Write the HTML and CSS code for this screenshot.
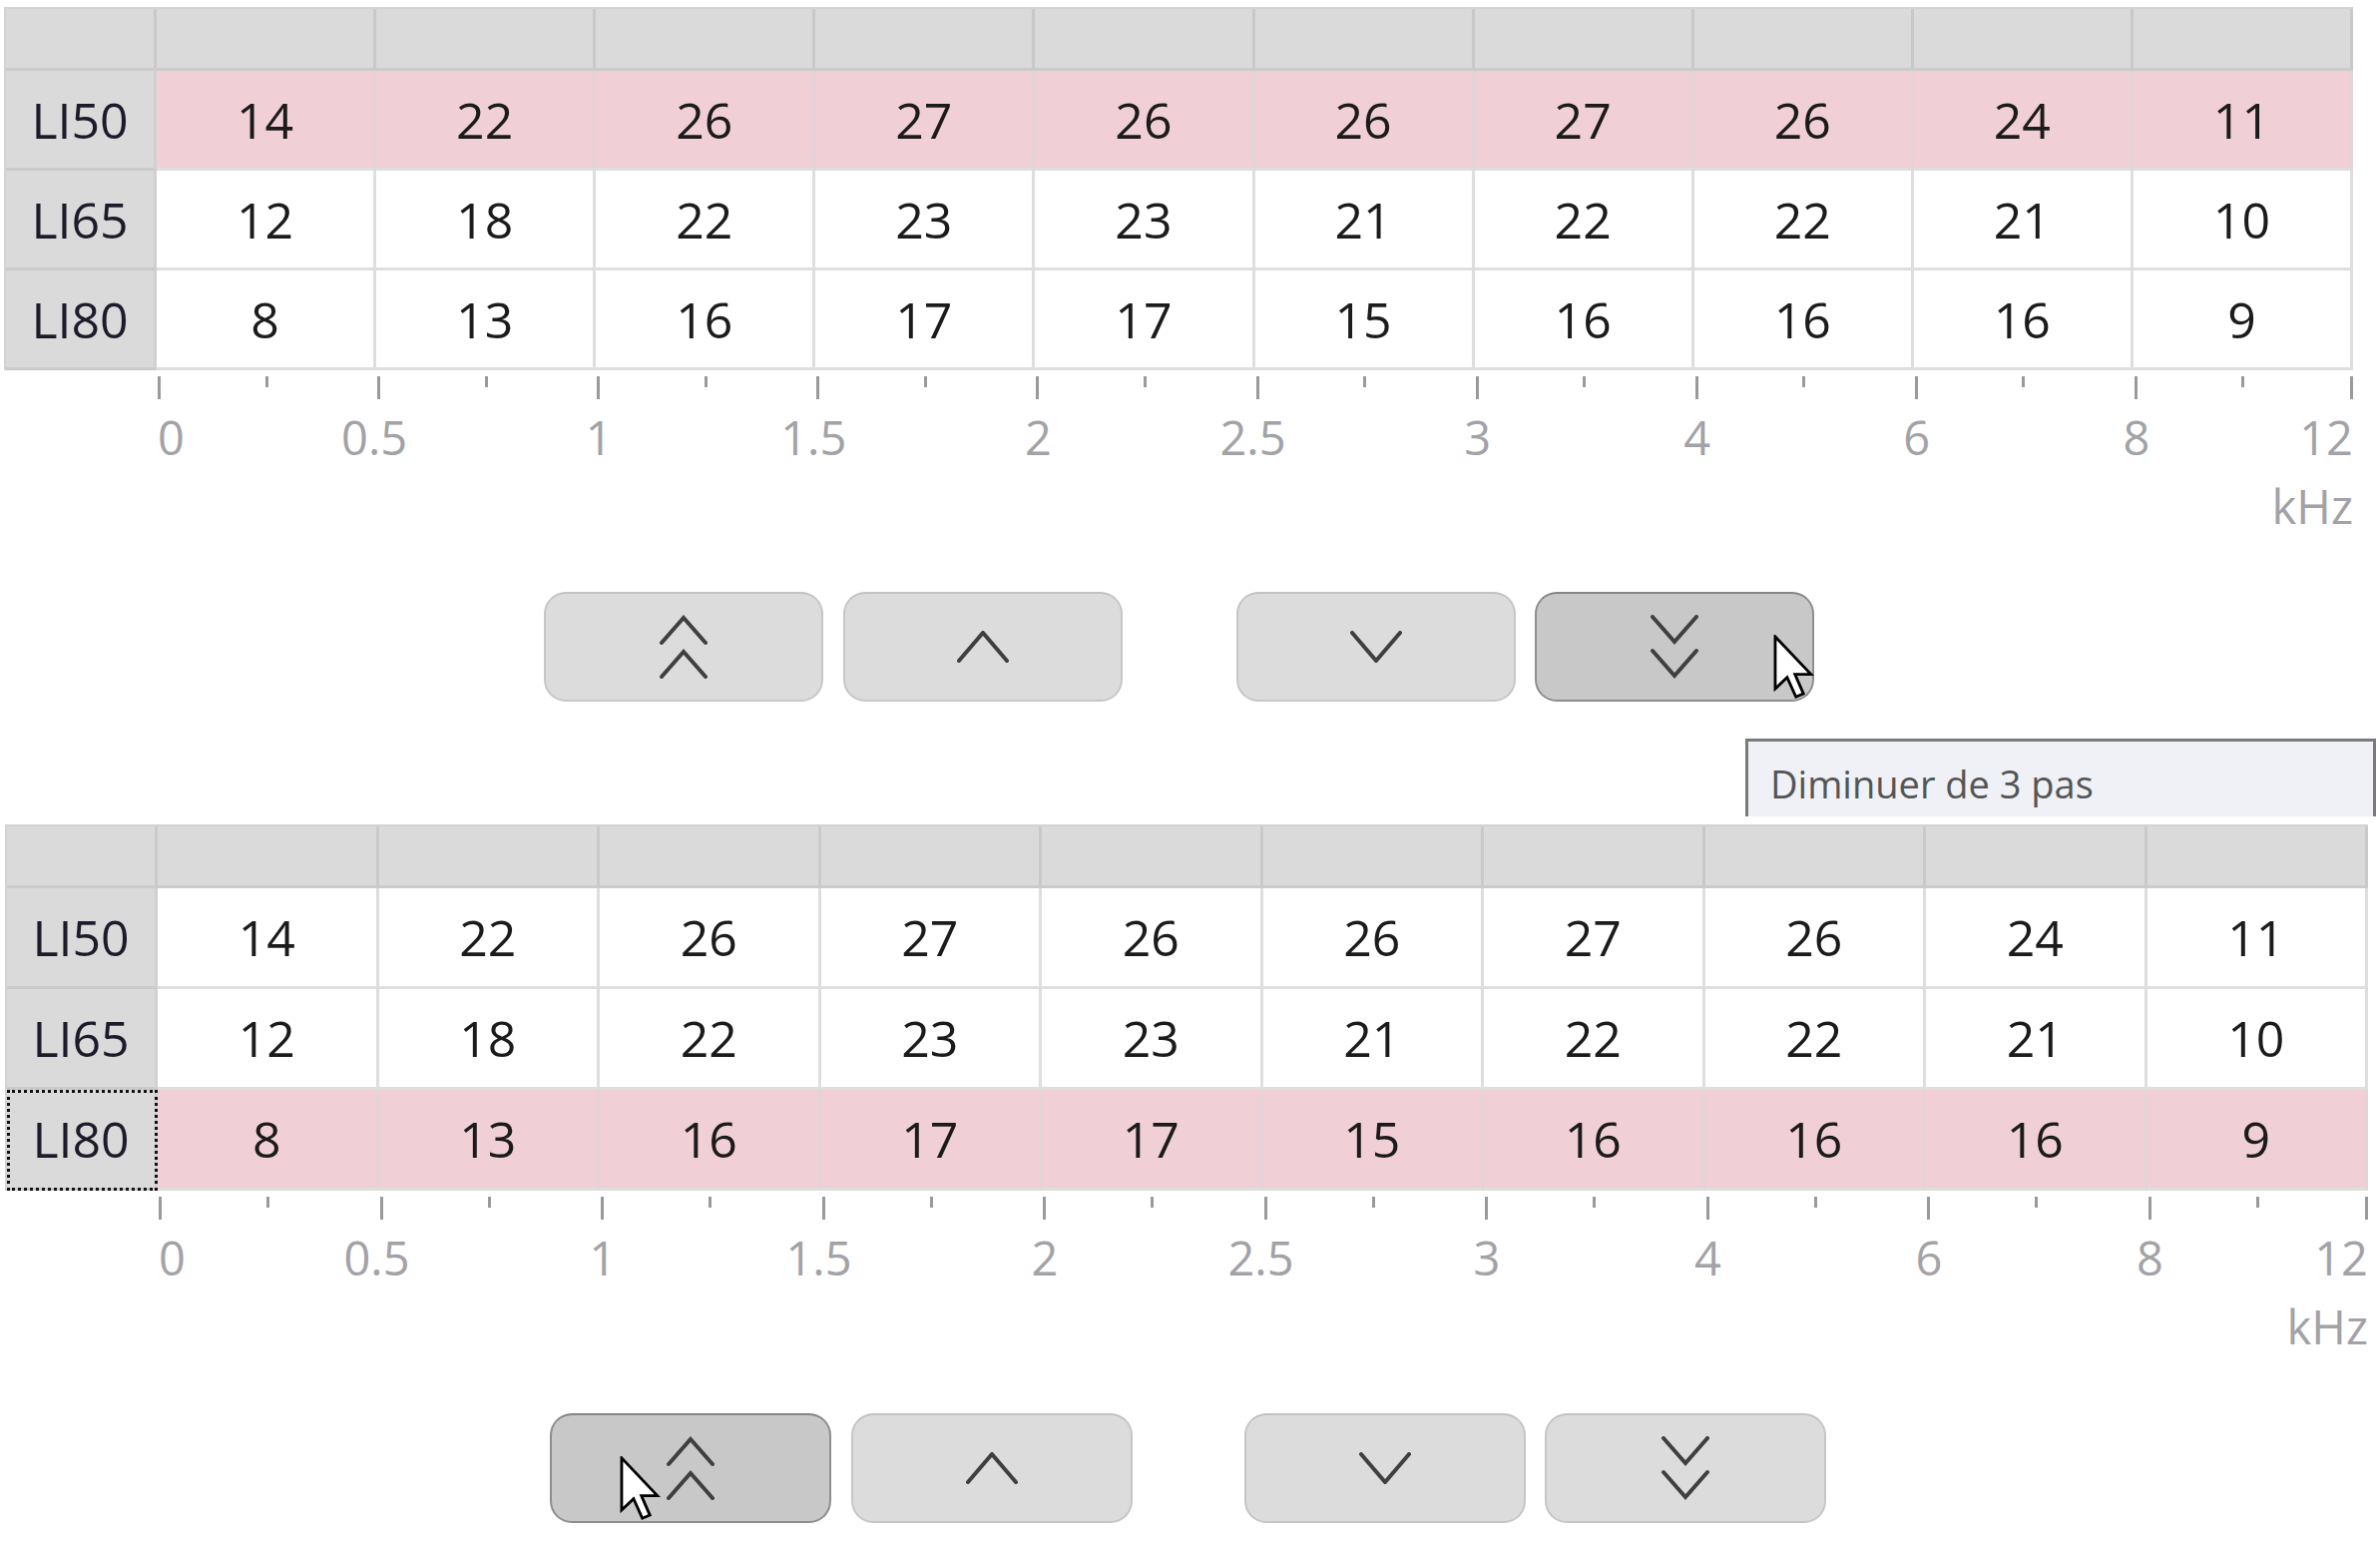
FILE: index.html
```html
<!DOCTYPE html>
<html lang="fr">
<head>
<meta charset="utf-8">
<title>LI</title>
<link rel="stylesheet" href="styles.css">
</head>
<body>
<div class="page">
  <section class="panel panel-a">
    <div class="grid-table">
      <div class="cell head"></div><div class="cell head"></div><div class="cell head"></div><div class="cell head"></div><div class="cell head"></div><div class="cell head"></div><div class="cell head"></div><div class="cell head"></div><div class="cell head"></div><div class="cell head"></div><div class="cell head"></div>
      <div class="cell label">LI50</div><div class="cell data hl">14</div><div class="cell data hl">22</div><div class="cell data hl">26</div><div class="cell data hl">27</div><div class="cell data hl">26</div><div class="cell data hl">26</div><div class="cell data hl">27</div><div class="cell data hl">26</div><div class="cell data hl">24</div><div class="cell data hl">11</div>
      <div class="cell label">LI65</div><div class="cell data">12</div><div class="cell data">18</div><div class="cell data">22</div><div class="cell data">23</div><div class="cell data">23</div><div class="cell data">21</div><div class="cell data">22</div><div class="cell data">22</div><div class="cell data">21</div><div class="cell data">10</div>
      <div class="cell label">LI80</div><div class="cell data">8</div><div class="cell data">13</div><div class="cell data">16</div><div class="cell data">17</div><div class="cell data">17</div><div class="cell data">15</div><div class="cell data">16</div><div class="cell data">16</div><div class="cell data">16</div><div class="cell data">9</div>
    </div>
    <div class="axis-ticks">
      <div></div><div class="tk"></div><div class="tk"></div><div class="tk"></div><div class="tk"></div><div class="tk"></div><div class="tk"></div><div class="tk"></div><div class="tk"></div><div class="tk"></div><div class="tk tk-last"></div>
    </div>
    <div class="axis-labels">
      <div></div>
      <div class="lb lb-first"><span>0</span></div>
      <div class="lb"><span class="wide">0.5</span></div>
      <div class="lb"><span>1</span></div>
      <div class="lb"><span class="wide">1.5</span></div>
      <div class="lb"><span>2</span></div>
      <div class="lb"><span class="wide">2.5</span></div>
      <div class="lb"><span>3</span></div>
      <div class="lb"><span>4</span></div>
      <div class="lb"><span>6</span></div>
      <div class="lb lb-last"><span>8</span><span class="end">12</span></div>
    </div>
    <div class="unit">kHz</div>
    <div class="btn-row">
      <div class="btn-group">
        <button class="btn" type="button"><svg class="ico-dbl" viewBox="0 0 48 64"><polyline points="2,28 24,3 46,28"/><polyline points="2,62 24,37 46,62"/></svg></button>
        <button class="btn" type="button"><svg class="ico-one" viewBox="0 0 52 32"><polyline points="2,30 26,2 50,30"/></svg></button>
      </div>
      <div class="btn-group group-right">
        <button class="btn" type="button"><svg class="ico-one" viewBox="0 0 52 32"><polyline points="2,2 26,30 50,2"/></svg></button>
        <button class="btn btn-active" type="button"><svg class="ico-dbl" viewBox="0 0 48 64"><polyline points="2,2 24,27 46,2"/><polyline points="2,36 24,61 46,36"/></svg>
          <svg class="cursor cursor-a" viewBox="0 0 13 21"><path d="M0.6,0.6 L0.6,17.2 L4.4,13.6 L7.2,19.8 L9.6,18.8 L6.9,12.6 L12,12.6 Z"/></svg>
        </button>
      </div>
    </div>
  </section>

  <div class="tooltip">Diminuer de 3 pas</div>

  <section class="panel panel-b">
    <div class="grid-table">
      <div class="cell head"></div><div class="cell head"></div><div class="cell head"></div><div class="cell head"></div><div class="cell head"></div><div class="cell head"></div><div class="cell head"></div><div class="cell head"></div><div class="cell head"></div><div class="cell head"></div><div class="cell head"></div>
      <div class="cell label">LI50</div><div class="cell data">14</div><div class="cell data">22</div><div class="cell data">26</div><div class="cell data">27</div><div class="cell data">26</div><div class="cell data">26</div><div class="cell data">27</div><div class="cell data">26</div><div class="cell data">24</div><div class="cell data">11</div>
      <div class="cell label">LI65</div><div class="cell data">12</div><div class="cell data">18</div><div class="cell data">22</div><div class="cell data">23</div><div class="cell data">23</div><div class="cell data">21</div><div class="cell data">22</div><div class="cell data">22</div><div class="cell data">21</div><div class="cell data">10</div>
      <div class="cell label focus">LI80</div><div class="cell data hl">8</div><div class="cell data hl">13</div><div class="cell data hl">16</div><div class="cell data hl">17</div><div class="cell data hl">17</div><div class="cell data hl">15</div><div class="cell data hl">16</div><div class="cell data hl">16</div><div class="cell data hl">16</div><div class="cell data hl">9</div>
    </div>
    <div class="axis-ticks">
      <div></div><div class="tk"></div><div class="tk"></div><div class="tk"></div><div class="tk"></div><div class="tk"></div><div class="tk"></div><div class="tk"></div><div class="tk"></div><div class="tk"></div><div class="tk tk-last"></div>
    </div>
    <div class="axis-labels">
      <div></div>
      <div class="lb lb-first"><span>0</span></div>
      <div class="lb"><span class="wide">0.5</span></div>
      <div class="lb"><span>1</span></div>
      <div class="lb"><span class="wide">1.5</span></div>
      <div class="lb"><span>2</span></div>
      <div class="lb"><span class="wide">2.5</span></div>
      <div class="lb"><span>3</span></div>
      <div class="lb"><span>4</span></div>
      <div class="lb"><span>6</span></div>
      <div class="lb lb-last"><span>8</span><span class="end">12</span></div>
    </div>
    <div class="unit">kHz</div>
    <div class="btn-row">
      <div class="btn-group">
        <button class="btn btn-active" type="button"><svg class="ico-dbl" viewBox="0 0 48 64"><polyline points="2,28 24,3 46,28"/><polyline points="2,62 24,37 46,62"/></svg>
          <svg class="cursor cursor-b" viewBox="0 0 13 21"><path d="M0.6,0.6 L0.6,17.2 L4.4,13.6 L7.2,19.8 L9.6,18.8 L6.9,12.6 L12,12.6 Z"/></svg>
        </button>
        <button class="btn" type="button"><svg class="ico-one" viewBox="0 0 52 32"><polyline points="2,30 26,2 50,30"/></svg></button>
      </div>
      <div class="btn-group group-right">
        <button class="btn" type="button"><svg class="ico-one" viewBox="0 0 52 32"><polyline points="2,2 26,30 50,2"/></svg></button>
        <button class="btn" type="button"><svg class="ico-dbl" viewBox="0 0 48 64"><polyline points="2,2 24,27 46,2"/><polyline points="2,36 24,61 46,36"/></svg></button>
      </div>
    </div>
  </section>
</div>
</body>
</html>
```

FILE: styles.css
```css
* { box-sizing: border-box; }

html, body {
  margin: 0;
  padding: 0;
  background: #ffffff;
}

body {
  font-family: "Open Sans", "Noto Sans", "Liberation Sans", sans-serif;
  color: #1b1b1b;
}

.page {
  position: relative;
  width: 2385px;
  height: 1546px;
  padding-top: 7px;
  overflow: hidden;
}

/* ---------- panels ---------- */
.panel-a {
  --tw: 2354px;
  --row-h: 100px;
  --btn-w: 280px;
  --gap-in: 20px;
  --gap-in2: 19px;
  --gap-mid: 114px;
  --btn-x: 541px;
  margin-left: 4px;
  width: 2354px;
}

.panel-b {
  --tw: 2368px;
  --row-h: 101px;
  --btn-w: 282px;
  --gap-in: 20px;
  --gap-in2: 19px;
  --gap-mid: 112px;
  --btn-x: 546px;
  margin-left: 5px;
  margin-top: 123px;
  width: 2368px;
}

/* ---------- table ---------- */
.grid-table {
  display: grid;
  width: var(--tw);
  grid-template-columns: 151px repeat(10, 1fr);
  grid-template-rows: 62px repeat(3, var(--row-h));
  border-left: 2px solid #d3d3d3;
  border-top: 2px solid #d3d3d3;
}

.cell {
  display: flex;
  align-items: center;
  justify-content: center;
  font-size: 50px;
  line-height: 1;
  border-right: 3px solid #dedede;
  border-bottom: 3px solid #dedede;
  background: #ffffff;
}

.cell.head {
  background: #dadada;
  border-right-color: #c9c9c9;
  border-bottom-color: #cbcbcb;
}

.cell.label {
  background: #dadada;
  color: #1d1b2a;
  border-right-color: #d0d0d0;
  border-bottom-color: #cacaca;
}

.cell.data.hl {
  background: #f1cfd7;
  border-right-color: #e2d4d8;
}

.cell.focus {
  outline: 3px dotted #111111;
  outline-offset: -3px;
}

/* ---------- axis ---------- */
.axis-ticks,
.axis-labels {
  display: grid;
  width: var(--tw);
  grid-template-columns: 153px repeat(10, 1fr);
}

.axis-ticks {
  height: 23px;
  margin-top: 6px;
}

.tk {
  background:
    linear-gradient(#9a9a9a, #9a9a9a) no-repeat 1px 0 / 3px 23px,
    linear-gradient(#9a9a9a, #9a9a9a) no-repeat 50% 0 / 3px 11px;
}

.tk-last {
  background:
    linear-gradient(#9a9a9a, #9a9a9a) no-repeat 1px 0 / 3px 23px,
    linear-gradient(#9a9a9a, #9a9a9a) no-repeat 50% 0 / 3px 11px,
    linear-gradient(#9a9a9a, #9a9a9a) no-repeat 100% 0 / 3px 23px;
}

.axis-labels {
  margin-top: 13px;
  height: 50px;
  font-size: 47px;
  font-weight: 400;
  line-height: 50px;
  color: #a2a2a7;
}

.lb span {
  display: inline-block;
  transform: translateX(calc(-50% + 3px));
}

.lb span.wide {
  transform: translateX(calc(-50% - 2px));
}

.lb-first span {
  transform: none;
  margin-left: 1px;
}

.lb-last {
  display: flex;
  justify-content: space-between;
}

.lb-last .end {
  transform: none;
}

.unit {
  width: var(--tw);
  margin-top: 19px;
  height: 50px;
  text-align: right;
  font-size: 47px;
  font-weight: 400;
  line-height: 50px;
  color: #a2a2a7;
}

/* ---------- buttons ---------- */
.btn-row {
  display: flex;
  margin-top: 61px;
  margin-left: var(--btn-x);
  gap: var(--gap-mid);
}

.panel-b .btn-row {
  margin-top: 62px;
}

.btn-group {
  display: flex;
  gap: var(--gap-in);
}

.btn-group.group-right {
  gap: var(--gap-in2);
}

.btn {
  position: relative;
  width: var(--btn-w);
  height: 110px;
  padding: 0;
  margin: 0;
  display: flex;
  align-items: center;
  justify-content: center;
  background: #dcdcdc;
  border: 2px solid #c6c6c6;
  border-top-color: #c2c2c2;
  border-radius: 22px;
  cursor: default;
}

.btn-active {
  background: #c8c8c8;
  border-color: #8e8e8e;
  border-top-color: #858585;
}

.btn svg polyline {
  fill: none;
  stroke: #3f3f3f;
  stroke-width: 4;
  stroke-linecap: round;
  stroke-linejoin: miter;
}

.ico-dbl {
  width: 48px;
  height: 64px;
}

.ico-one {
  width: 52px;
  height: 32px;
}

/* ---------- overlays ---------- */
.cursor {
  position: absolute;
  width: 41px;
  height: 66px;
}

.cursor path {
  fill: #ffffff;
  stroke: #000000;
  stroke-width: 0.9;
  stroke-linejoin: miter;
}

.cursor-a {
  left: 237px;
  top: 41px;
}

.cursor-b {
  left: 68px;
  top: 41px;
}

.tooltip {
  position: absolute;
  left: 1749px;
  top: 740px;
  width: 632px;
  height: 78px;
  padding: 16px 0 0 22px;
  background: #eff1f6;
  border: 3px solid #7a7a7a;
  border-bottom: none;
  font-size: 38px;
  line-height: 52px;
  color: #555555;
  white-space: nowrap;
}
```
